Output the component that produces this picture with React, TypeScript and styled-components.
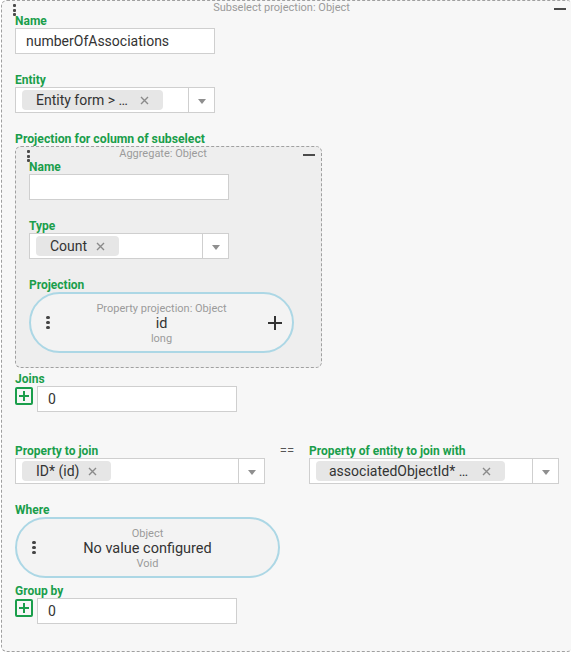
import React from "react";
import styled, { createGlobalStyle, css } from "styled-components";

const GlobalStyle = createGlobalStyle`
  html, body {
    margin: 0;
    padding: 0;
    overflow: hidden;
    background: #ffffff;
  }
  body {
    font-family: Roboto, "Liberation Sans", Arial, sans-serif;
    color: #333333;
  }
  * { box-sizing: border-box; }
`;

const GREEN = "#1a9e4b";

const Panel = styled.div<{ $nested?: boolean }>`
  display: flex;
  flex-direction: column;
  border: 1px dashed #a0a0a0;
  border-radius: 6px;
  padding: 0 13px 14px;
  ${(p) =>
    p.$nested
      ? css`
          width: 307px;
          background: #eeeeee;
        `
      : css`
          width: 572px;
          min-height: 652px;
          margin-left: 1px;
          background: #f7f7f7;
        `}
`;

const PanelHeader = styled.div`
  display: flex;
  align-items: flex-start;
  height: 12px;
  margin: 0 -7px 0 -2px;
`;

const DragHandle = styled.div`
  display: flex;
  flex-direction: column;
  gap: 1.5px;
  margin-top: 3px;
  span {
    display: block;
    width: 3px;
    height: 3px;
    border-radius: 1px;
    background: #4a4a4a;
  }
`;

const PanelTitle = styled.div`
  flex: 1;
  text-align: center;
  padding-right: 7px;
  font-size: 11px;
  line-height: 13px;
  color: #9b9b9b;
`;

const CollapseButton = styled.div`
  width: 12px;
  height: 2px;
  margin-top: 7px;
  background: #4a4a4a;
`;

const Field = styled.div<{ $gap?: number }>`
  display: flex;
  flex-direction: column;
  margin-bottom: ${(p) => p.$gap ?? 18}px;
`;

const Label = styled.div<{ $size?: number }>`
  font-size: ${(p) => p.$size ?? 12}px;
  font-weight: 700;
  line-height: 14px;
  color: ${GREEN};
  padding-top: 1px;
  white-space: nowrap;
`;

const TextInput = styled.input`
  width: 200px;
  height: 26px;
  border: 1px solid #cfcfcf;
  background: #ffffff;
  padding: 0 10px;
  font-family: Roboto, "Liberation Sans", Arial, sans-serif;
  font-size: 14px;
  color: #333333;
  outline: none;
`;

const SelectBox = styled.div<{ $width: number }>`
  display: flex;
  align-items: center;
  width: ${(p) => p.$width}px;
  height: 26px;
  border: 1px solid #cfcfcf;
  background: #ffffff;
`;

const SelectValue = styled.div`
  flex: 1;
  display: flex;
  align-items: center;
  padding-left: 6px;
  min-width: 0;
`;

const Chip = styled.div<{ $pad: number }>`
  display: flex;
  align-items: center;
  gap: 9px;
  height: 20px;
  padding: 0 14px 0 ${(p) => p.$pad}px;
  border-radius: 4px;
  background: #e6e6e6;
  font-size: 14px;
  color: #333333;
  white-space: nowrap;
`;

const ChipText = styled.span<{ $width?: number }>`
  display: inline-block;
  ${(p) => (p.$width ? `width: ${p.$width}px;` : "")}
`;

const ChipRemove = styled.svg`
  width: 9px;
  height: 9px;
  stroke: #8a8a8a;
  stroke-width: 1.4;
  flex: none;
`;

const ArrowArea = styled.div`
  width: 26px;
  height: 100%;
  border-left: 1px solid #cfcfcf;
  display: flex;
  align-items: center;
  justify-content: center;
  &::after {
    content: "";
    margin-top: 2px;
    border-left: 4px solid transparent;
    border-right: 4px solid transparent;
    border-top: 5px solid #8f8f8f;
  }
`;

const ValuePill = styled.div`
  display: grid;
  grid-template-columns: 40px 1fr 40px;
  align-items: center;
  width: 265px;
  height: 61px;
  border: 2px solid #acd7e5;
  border-radius: 31px;
  background: #f3f3f3;
`;

const PillDots = styled.div`
  display: flex;
  flex-direction: column;
  gap: 1.5px;
  padding-left: 15px;
  span {
    display: block;
    width: 3.5px;
    height: 3.5px;
    border-radius: 50%;
    background: #444444;
  }
`;

const PillBody = styled.div`
  display: flex;
  flex-direction: column;
  align-items: center;
  padding-top: 1px;
`;

const PillCaption = styled.div`
  font-size: 11px;
  line-height: 15px;
  color: #9b9b9b;
  white-space: nowrap;
`;

const PillValue = styled.div`
  font-size: 14.5px;
  line-height: 15px;
  color: #333333;
  white-space: nowrap;
`;

const PillAdd = styled.svg`
  justify-self: end;
  margin-right: 10px;
  width: 14px;
  height: 14px;
  stroke: #333333;
  stroke-width: 2;
`;

const ListRow = styled.div`
  display: flex;
  align-items: flex-start;
  gap: 4px;
`;

const AddButton = styled.button`
  width: 18px;
  height: 18px;
  margin-top: 1px;
  padding: 0;
  border: 2px solid ${GREEN};
  border-radius: 2px;
  background: transparent;
  display: flex;
  align-items: center;
  justify-content: center;
  svg {
    width: 10px;
    height: 10px;
    stroke: ${GREEN};
    stroke-width: 2;
  }
`;

const JoinGrid = styled.div`
  display: grid;
  grid-template-columns: 250px 44px 250px;
`;

const Equals = styled.div`
  text-align: center;
  font-size: 13px;
  line-height: 14px;
  color: #555555;
  padding-top: 1px;
`;

const Handle = () => (
  <DragHandle>
    <span />
    <span />
    <span />
  </DragHandle>
);

const Header = ({ title }: { title: string }) => (
  <PanelHeader>
    <Handle />
    <PanelTitle>{title}</PanelTitle>
    <CollapseButton />
  </PanelHeader>
);

const Cross = () => (
  <ChipRemove viewBox="0 0 9 9">
    <path d="M1 1 L8 8 M8 1 L1 8" />
  </ChipRemove>
);

const Select = ({
  value,
  width,
  pad = 14,
  textWidth,
}: {
  value: string;
  width: number;
  pad?: number;
  textWidth?: number;
}) => (
  <SelectBox $width={width}>
    <SelectValue>
      <Chip $pad={pad}>
        <ChipText $width={textWidth}>{value}</ChipText>
        <Cross />
      </Chip>
    </SelectValue>
    <ArrowArea />
  </SelectBox>
);

const Pill = ({
  caption,
  value,
  type,
  addable,
}: {
  caption: string;
  value: string;
  type: string;
  addable?: boolean;
}) => (
  <ValuePill>
    <PillDots>
      <span />
      <span />
      <span />
    </PillDots>
    <PillBody>
      <PillCaption>{caption}</PillCaption>
      <PillValue>{value}</PillValue>
      <PillCaption>{type}</PillCaption>
    </PillBody>
    {addable ? (
      <PillAdd viewBox="0 0 14 14">
        <path d="M7 0 V14 M0 7 H14" />
      </PillAdd>
    ) : (
      <span />
    )}
  </ValuePill>
);

const CountList = ({ count }: { count: string }) => (
  <ListRow>
    <AddButton type="button" aria-label="add">
      <svg viewBox="0 0 10 10">
        <path d="M5 0 V10 M0 5 H10" />
      </svg>
    </AddButton>
    <TextInput readOnly value={count} />
  </ListRow>
);

export default function App() {
  return (
    <>
      <GlobalStyle />
      <Panel>
        <Header title="Subselect projection: Object" />
        <Field>
          <Label>Name</Label>
          <TextInput readOnly value="numberOfAssociations" />
        </Field>
        <Field>
          <Label>Entity</Label>
          <Select value="Entity form > …" width={200} textWidth={95} />
        </Field>
        <Field $gap={3}>
          <Label $size={12.25}>Projection for column of subselect</Label>
          <Panel $nested>
            <Header title="Aggregate: Object" />
            <Field>
              <Label>Name</Label>
              <TextInput readOnly value="" />
            </Field>
            <Field>
              <Label>Type</Label>
              <Select value="Count" width={200} />
            </Field>
            <Field $gap={0}>
              <Label>Projection</Label>
              <Pill caption="Property projection: Object" value="id" type="long" addable />
            </Field>
          </Panel>
        </Field>
        <Field $gap={31}>
          <Label>Joins</Label>
          <CountList count="0" />
        </Field>
        <JoinGrid>
          <Field>
            <Label>Property to join</Label>
            <Select value="ID* (id)" width={250} />
          </Field>
          <Equals>==</Equals>
          <Field>
            <Label>Property of entity to join with</Label>
            <Select value="associatedObjectId* …" width={250} pad={13} textWidth={144} />
          </Field>
        </JoinGrid>
        <Field $gap={5}>
          <Label>Where</Label>
          <Pill caption="Object" value="No value configured" type="Void" />
        </Field>
        <Field $gap={0}>
          <Label>Group by</Label>
          <CountList count="0" />
        </Field>
      </Panel>
    </>
  );
}
